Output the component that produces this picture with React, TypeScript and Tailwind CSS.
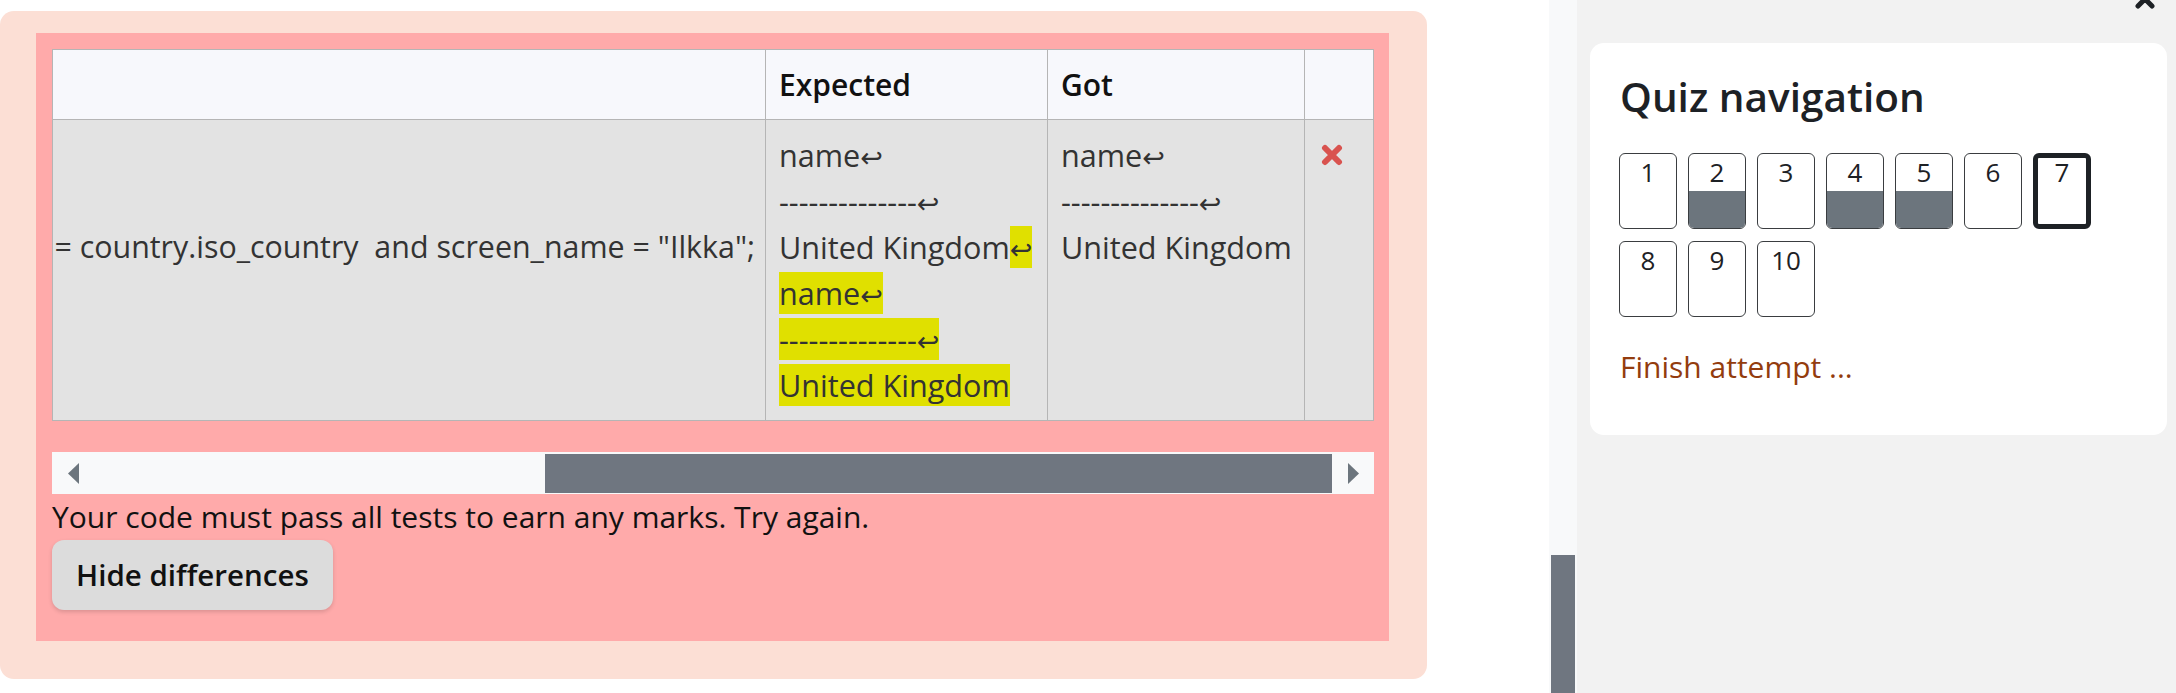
import React from "react";

const RET = "\u21A9";
const DASHES = "--------------";

const Hl = ({ children }: { children: React.ReactNode }) => (
  <span className="bg-[#e0e000]">{children}</span>
);

const Line = ({ children }: { children?: React.ReactNode }) => (
  <div className="h-[46px] whitespace-pre">{children}</div>
);

const Ret = () => <span className="font-['DejaVu_Sans',sans-serif] text-[27px]">{RET}</span>;

const FailIcon = () => (
  <svg width="22" height="22" viewBox="0 0 22 22" className="inline-block">
    <path d="M4 4 L18 18 M18 4 L4 18" stroke="#d9534f" strokeWidth="6" strokeLinecap="round" fill="none" />
  </svg>
);

const NavButton = ({ n, answered, current }: { n: number; answered?: boolean; current?: boolean }) => (
  <div
    className={
      current
        ? "flex h-[76px] w-[58px] flex-col overflow-hidden rounded-[6px] border-[5px] border-[#1d2125] bg-white"
        : "flex h-[76px] w-[58px] flex-col overflow-hidden rounded-[6px] border border-[#3a3d40] bg-white"
    }
  >
    <div className={current ? "h-[32px] text-center text-[26px] leading-[28px]" : "h-[37px] text-center text-[26px] leading-[36px]"}>
      {n}
    </div>
    {answered ? <div className="flex-1 bg-[#6c757d]" /> : null}
  </div>
);

export default function App() {
  return (
    <div className="flex h-[693px] w-[2176px] overflow-hidden bg-white font-['Open_Sans',sans-serif] text-[30px] leading-[46px] text-[#1d2125]">
      {/* main column */}
      <div className="w-[1549px] shrink-0 pt-[11px]">
        <div className="w-[1427px] rounded-[14px] bg-[#fcdfd5] pb-[38px] pl-[36px] pr-[38px] pt-[22px]">
          <div className="h-[608px] bg-[#ffaaaa] pl-[16px] pr-[15px] pt-[16px]">
            {/* result table */}
            <div className="grid w-[1322px] grid-cols-[712px_282px_257px_69px] border border-[#b5b5b5] text-[#333]">
              <div className="h-[70px] border-b border-[#b5b5b5] bg-[#f7f8fc]" />
              <div className="flex h-[70px] items-center border-b border-l border-[#b5b5b5] bg-[#f7f8fc] pl-[13px] font-semibold text-[#111]">
                Expected
              </div>
              <div className="flex h-[70px] items-center border-b border-l border-[#b5b5b5] bg-[#f7f8fc] pl-[13px] font-semibold text-[#111]">
                Got
              </div>
              <div className="h-[70px] border-b border-l border-[#b5b5b5] bg-[#f7f8fc]" />

              <div className="h-[300px] overflow-hidden bg-[#e3e3e3] pr-[10px] pt-[12px] text-[30.4px]">
                <Line />
                <Line />
                <div className="flex h-[46px] justify-end">
                  <span className="shrink-0 whitespace-pre">= country.iso_country  and screen_name = "Ilkka";</span>
                </div>
              </div>
              <div className="h-[300px] border-l border-[#b5b5b5] bg-[#e3e3e3] pl-[13px] pt-[12px] text-[30.6px]">
                <Line>name<Ret /></Line>
                <Line>{DASHES}<Ret /></Line>
                <Line>United Kingdom<Hl><Ret /></Hl></Line>
                <Line><Hl>name<Ret /></Hl></Line>
                <Line><Hl>{DASHES}<Ret /></Hl></Line>
                <Line><Hl>United Kingdom</Hl></Line>
              </div>
              <div className="h-[300px] border-l border-[#b5b5b5] bg-[#e3e3e3] pl-[13px] pt-[12px] text-[30.6px]">
                <Line>name<Ret /></Line>
                <Line>{DASHES}<Ret /></Line>
                <Line>United Kingdom</Line>
              </div>
              <div className="h-[300px] border-l border-[#b5b5b5] bg-[#e3e3e3] pl-[16px] pt-[12px]">
                <div className="flex h-[46px] items-center">
                  <FailIcon />
                </div>
              </div>
            </div>

            {/* horizontal scrollbar */}
            <div className="mt-[31px] flex h-[42px] w-[1322px] items-start bg-[#f8f9fa] pt-[2px]">
              <svg width="11" height="21" viewBox="0 0 11 21" className="ml-[16px] mt-[9px]">
                <path d="M11 0 L0 10.5 L11 21 Z" fill="#6c757d" />
              </svg>
              <div className="ml-[466px] h-[39px] w-[787px] bg-[#6f7680]" />
              <svg width="11" height="21" viewBox="0 0 11 21" className="ml-[16px] mt-[9px]">
                <path d="M0 0 L11 10.5 L0 21 Z" fill="#6c757d" />
              </svg>
            </div>

            <div className="text-[#111]">Your code must pass all tests to earn any marks. Try again.</div>
            <button className="h-[70px] rounded-[12px] bg-[#dcdcdc] px-[24px] text-[29.5px] font-semibold text-[#111] shadow-[0_2px_4px_rgba(0,0,0,0.15)]">
              Hide differences
            </button>
          </div>
        </div>
      </div>

      {/* page scrollbar */}
      <div className="flex w-[28px] shrink-0 flex-col bg-[#f8f9fa]">
        <div className="flex-1" />
        <div className="mx-[2px] h-[138px] bg-[#6f7680]" />
      </div>

      {/* drawer */}
      <div className="relative flex-1 bg-[#f2f2f2] pl-[13px] pr-[9px] pt-[43px]">
        <svg width="26" height="26" viewBox="0 0 26 26" className="absolute left-[555px] top-[-14px]">
          <path d="M6 6 L20 20 M20 6 L6 20" stroke="#1d2125" strokeWidth="5" strokeLinecap="round" fill="none" />
        </svg>
        <div className="h-[392px] rounded-[14px] bg-white pl-[29px] pr-[30px] pt-[31px]">
          <div className="pl-[1px] text-[40.5px] font-semibold leading-[46px] text-[#1d2125]">Quiz navigation</div>
          <div className="mt-[33px] flex flex-wrap gap-x-[11px] gap-y-[12px]">
            <NavButton n={1} />
            <NavButton n={2} answered />
            <NavButton n={3} />
            <NavButton n={4} answered />
            <NavButton n={5} answered />
            <NavButton n={6} />
            <NavButton n={7} current />
            <NavButton n={8} />
            <NavButton n={9} />
            <NavButton n={10} />
          </div>
          <div className="mt-[27px] pl-[1px] text-[#933c0e]">Finish attempt ...</div>
        </div>
      </div>
    </div>
  );
}
